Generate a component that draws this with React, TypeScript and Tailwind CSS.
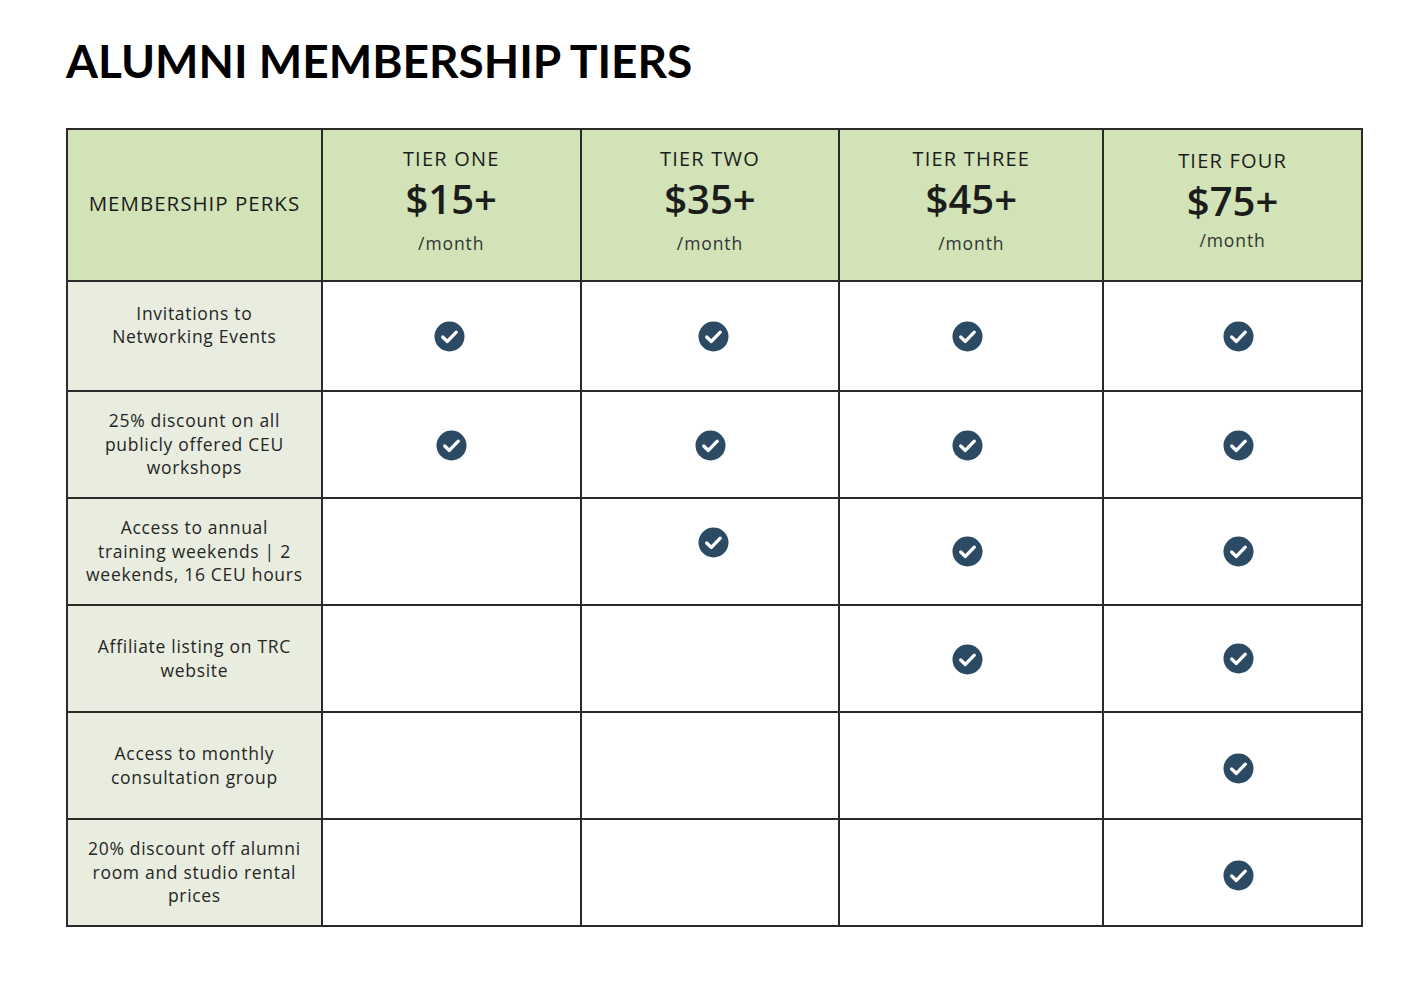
import React from "react";

const tiers = [
  { name: "TIER ONE", price: "$15+", pad: "pt-[17px]", gap: "mt-[10px]" },
  { name: "TIER TWO", price: "$35+", pad: "pt-[17px]", gap: "mt-[10px]" },
  { name: "TIER THREE", price: "$45+", pad: "pt-[17px]", gap: "mt-[10px]" },
  { name: "TIER FOUR", price: "$75+", pad: "pt-[19px]", gap: "mt-[5px]" },
];

// each entry is either null (no perk) or the nudge that places the tick in that cell
const perks = [
  {
    label: "Invitations to\nNetworking Events",
    h: "h-[110px]",
    text: "pb-[22px]",
    checks: ["-translate-x-[2px]", "translate-x-[3px]", "-translate-x-[4px]", "translate-x-[6px]"],
  },
  {
    label: "25% discount on all\npublicly offered CEU\nworkshops",
    h: "h-[107px]",
    text: "pb-[0px]",
    checks: ["translate-y-[1px]", "translate-y-[1px]", "-translate-x-[4px] translate-y-[1px]", "translate-x-[6px] translate-y-[1px]"],
  },
  {
    label: "Access to annual\ntraining weekends | 2\nweekends, 16 CEU hours",
    h: "h-[107px]",
    text: "pb-[0px]",
    checks: [null, "translate-x-[3px] -translate-y-[9px]", "-translate-x-[4px]", "translate-x-[6px]"],
  },
  {
    label: "Affiliate listing on TRC\nwebsite",
    h: "h-[107px]",
    text: "pb-[0px]",
    checks: [null, null, "-translate-x-[4px] translate-y-[1px]", "translate-x-[6px]"],
  },
  {
    label: "Access to monthly\nconsultation group",
    h: "h-[107px]",
    text: "pb-[0px]",
    checks: [null, null, null, "translate-x-[6px] translate-y-[3px]"],
  },
  {
    label: "20% discount off alumni\nroom and studio rental\nprices",
    h: "h-[107px]",
    text: "pb-[0px]",
    checks: [null, null, null, "translate-x-[6px] translate-y-[3px]"],
  },
];

const colW = ["w-[259px]", "w-[259px]", "w-[264px]", "w-[259px]"];

function Check() {
  return (
    <svg width="31" height="31" viewBox="0 0 32 32">
      <circle cx="16" cy="16" r="15.5" fill="#2d4a65" />
      <path d="M9 16.5l4.8 4.6L23 11.5" fill="none" stroke="#fff" strokeWidth="3.4" strokeLinecap="round" strokeLinejoin="round" />
    </svg>
  );
}

export default function App() {
  return (
    <div className="min-h-[988px] bg-white px-[66px] pt-[37px]" style={{ fontFamily: '"Open Sans", "Noto Sans", sans-serif' }}>
      <h1 className="text-[46px] font-bold leading-[48px] tracking-[0px] text-black" style={{ fontFamily: 'Lato, "Liberation Sans", sans-serif' }}>
        ALUMNI MEMBERSHIP TIERS
      </h1>

      <div className="mt-[43px] w-[1297px] border-l-2 border-t-2 border-[#2a2a2a] text-[#1c1c1c]">
        <div className="flex h-[152px]">
          <div className="flex w-[255px] items-center justify-center border-b-2 border-r-2 border-[#2a2a2a] bg-[#d1e3b7] pb-[4px] text-[20.5px] tracking-[1px]">
            MEMBERSHIP PERKS
          </div>
          {tiers.map((t, i) => (
            <div key={t.name} className={`flex ${colW[i]} flex-col items-center border-b-2 border-r-2 border-[#2a2a2a] bg-[#d1e3b7] ${t.pad}`}>
              <div className="text-[20px] leading-[24px] tracking-[1.2px]">{t.name}</div>
              <div className="mt-[5px] text-[40px] font-semibold leading-[46px]">{t.price}</div>
              <div className={`${t.gap} text-[17.5px] leading-[22px] tracking-[0.9px] text-[#333]`}>/month</div>
            </div>
          ))}
        </div>

        {perks.map((p) => (
          <div key={p.label} className={`flex ${p.h}`}>
            <div className={`flex w-[255px] items-center justify-center whitespace-pre-line border-b-2 border-r-2 border-[#2a2a2a] bg-[#e8eddf] px-1 text-center text-[17.5px] leading-[23.5px] tracking-[0.7px] text-[#262626] ${p.text}`}>
              {p.label}
            </div>
            {p.checks.map((c, i) => (
              <div key={i} className={`flex ${colW[i]} items-center justify-center border-b-2 border-r-2 border-[#2a2a2a]`}>
                {c !== null ? (
                  <div className={c}>
                    <Check />
                  </div>
                ) : null}
              </div>
            ))}
          </div>
        ))}
      </div>
    </div>
  );
}
